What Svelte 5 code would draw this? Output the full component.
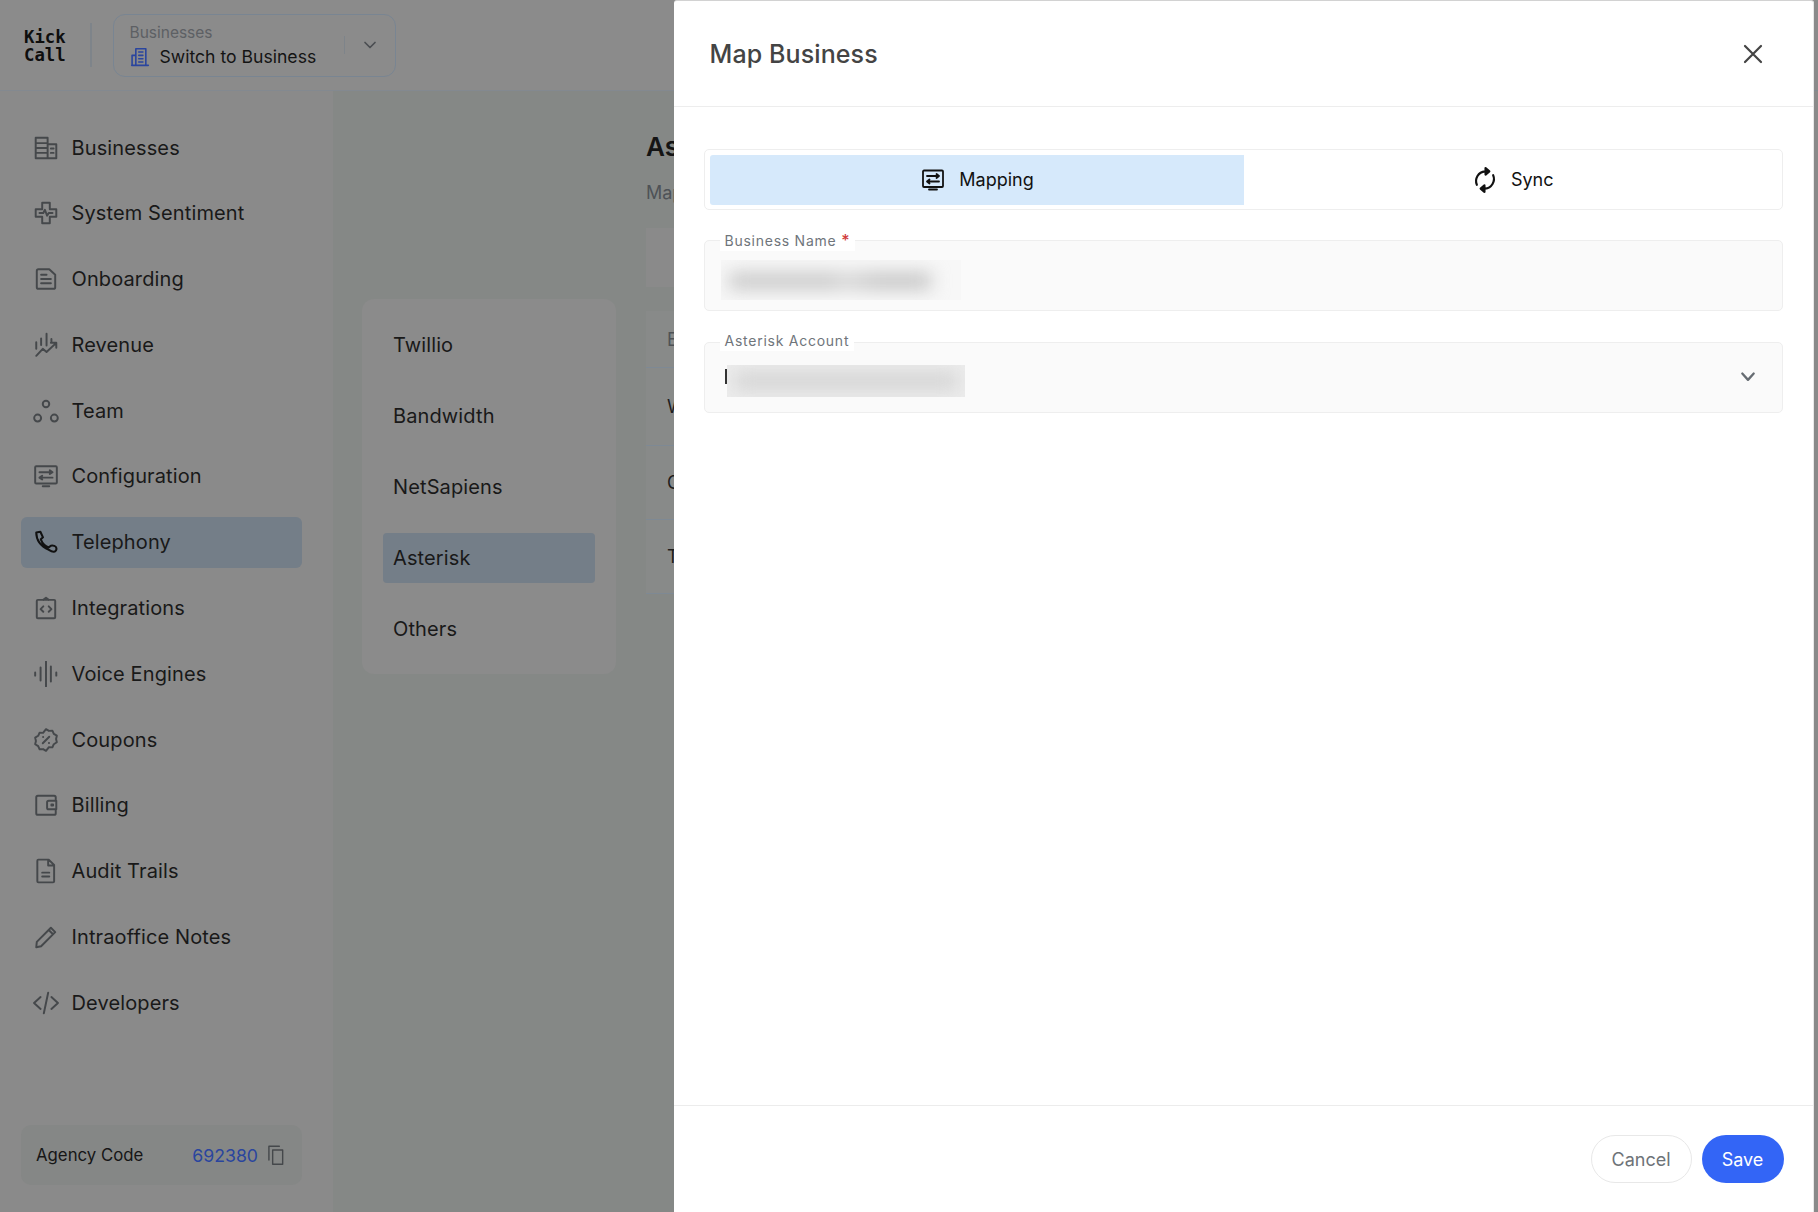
<script>
  const nav = [
    { label: 'Businesses', d: 'M2.500 2.500h11v19h-11zM13.500 8.500H21.500v13h-8M2.500 7.500h11M2.500 12h11M2.500 16.500h11M16.500 12.500h2.500M16.500 16.500h2.500' },
    { label: 'System Sentiment', d: 'M8.500 2.500h7v6H21.500v7h-6v6h-7v-6h-6v-7h6zM6 12h3.500l1.500-3 2 5.500 1.500-2.500H18' },
    { label: 'Onboarding', d: 'M3.500 4.500A1.500 1.500 0 0 1 5 3H15l5.500 5v11.500A1.500 1.500 0 0 1 19 21H5a1.500 1.500 0 0 1-1.500-1.500zM7.500 8h5M7.500 12h9M7.500 16h9' },
    { label: 'Revenue', d: 'M12.500 1.500v11M7.500 6v6M3 9.500v6M17 6.500v3M3 22l6-6.500 3.500 3L21 10.500M16.500 10H21.500v4.500' },
    { label: 'Team', d: 'M15 5.500a3 3 0 1 1-6 0 3 3 0 1 1 6 0zM7.500 18.500a3.200 3.200 0 1 1-6.400 0 3.200 3.200 0 1 1 6.400 0zM22.900 18.500a3.200 3.200 0 1 1-6.400 0 3.200 3.200 0 1 1 6.400 0z' },
    { label: 'Configuration', d: 'M3 3h18a1 1 0 0 1 1 1v14a1 1 0 0 1-1 1H3a1 1 0 0 1-1-1V4a1 1 0 0 1 1-1zM6 8.500h12M15.500 6.800l2.500 1.700-2.500 1.700M18 13.500H6M8.500 11.800 6 13.500l2.500 1.700M9 21.500h6' },
    { label: 'Telephony', active: true, d: 'M3 3.200 6.800 2.500l2.400 5.200-2 1.800c1.300 3.500 4 6.200 7.300 7.500M14.500 17l2-1.600c2-.6 4.800.4 5.100 2.200.2 1.600-.6 3.200-2.300 3.400-1.800.2-3-.6-4.600-1.700C8.500 16.500 3 11 3 3.200' },
    { label: 'Integrations', d: 'M4.500 4.500h15a1 1 0 0 1 1 1v15a1 1 0 0 1-1 1h-15a1 1 0 0 1-1-1v-15a1 1 0 0 1 1-1zM9.500 4.500 12 2.500l2.500 2M9.500 10.500 7 13l2.500 2.500M14.500 10.500 17 13l-2.500 2.500' },
    { label: 'Voice Engines', d: 'M2 10.500v3M7 6v12M12 .500v23M16.500 5v14M21.500 10.500v3' },
    { label: 'Coupons', d: 'M12 2l2.700 1.600 3.200-.2 1.300 2.900 2.800 1.700-.7 3.100.7 3-2.800 1.800-1.300 2.900-3.200-.2L12 22l-2.700-1.600-3.200.2-1.300-2.900L2 15.900l.7-3-.7-3.100 2.800-1.700 1.300-2.900 3.200.2zM9 15l6-6M9.300 9.300h.1M14.700 14.700h.1' },
    { label: 'Billing', d: 'M21 7V5a1.500 1.500 0 0 0-1.500-1.500h-15A1.500 1.500 0 0 0 3 5v14.500A1.500 1.500 0 0 0 4.500 21h15a1.500 1.500 0 0 0 1.500-1.500V17M21.500 8h-7a1.500 1.500 0 0 0-1.500 1.500v5a1.500 1.500 0 0 0 1.500 1.500h7zM17 11.500h1.500v1H17z' },
    { label: 'Audit Trails', d: 'M5 1.500h9.500l5 5v15a1 1 0 0 1-1 1H5a1 1 0 0 1-1-1v-19a1 1 0 0 1 1-1zM14 1.500v5.500h5.500M8.500 13.500h6.500M8.500 17h6.500' },
    { label: 'Intraoffice Notes', d: 'M3.500 16.500 16.500 3.500l4 4L7.500 20.500 3 21.500zM14.500 5.500l4 4' },
    { label: 'Developers', d: 'M7 6.500 1 12l6 5.500M17 6.500l6 5.500-6 5.500M14 2.500l-4 19' }
  ];
  const providers = ['Twillio', 'Bandwidth', 'NetSapiens', 'Asterisk', 'Others'];
  const rows = ['Ext', 'West', 'Central', 'Trunk'];
</script>

<div class="page">
  <header class="topbar">
    <div class="logo">Kick<br />Call</div>
    <div class="vline"></div>
    <div class="switcher">
      <div class="switch-text">
        <span class="switch-label">Businesses</span>
        <span class="switch-value">
          <svg class="bicon" viewBox="0 0 24 24"><path d="M7 2h12v20H7zM7 10H2.500v12H7M22 22H2M10.500 6h5M10.500 10h5M10.500 14h5M10.500 18h5" /></svg>
          Switch to Business
        </span>
      </div>
      <div class="switch-div"></div>
      <svg class="switch-chev" viewBox="0 0 14 14"><path d="M2 4.500 7 9.500l5-5" /></svg>
    </div>
  </header>

  <div class="body">
    <aside class="sidebar">
      <nav class="nav">
        {#each nav as item}
          <div class="nav-item" class:active={item.active}>
            <svg class="nav-icon" viewBox="0 0 24 24"><path d={item.d} /></svg>
            <span>{item.label}</span>
          </div>
        {/each}
      </nav>
      <div class="agency">
        <span>Agency Code</span>
        <span class="code">692380
          <svg class="copy" viewBox="0 0 24 24"><path d="M8 6h12v17H8zM3.500 18V1.500H16" /></svg>
        </span>
      </div>
    </aside>

    <div class="submenu-col">
      <div class="submenu">
        {#each providers as p}
          <div class="sub-item" class:active={p === 'Asterisk'}>{p}</div>
        {/each}
      </div>
    </div>

    <main class="content">
      <h1>Asterisk</h1>
      <p>Mapping</p>
      <div class="table-head"></div>
      <div class="rows">
        {#each rows as r, i}
          <div class="row" style="height:{[57,78,74,74][i]}px">{r}</div>
        {/each}
      </div>
    </main>
  </div>

  <section class="modal">
    <div class="modal-head">
      <h2>Map Business</h2>
      <svg class="close" viewBox="0 0 20 20"><path d="M2 2l16 16M18 2 2 18" /></svg>
    </div>
    <div class="modal-body">
      <div class="tabs">
        <div class="tab on">
          <svg class="tab-icon" viewBox="0 0 24 24"><path d="M3 2.500h18a1 1 0 0 1 1 1V18a1 1 0 0 1-1 1H3a1 1 0 0 1-1-1V3.500a1 1 0 0 1 1-1zM6 8h12M15.500 6l2.500 2-2.500 2M18 13.500H6M8.500 11.500 6 13.500l2.500 2M8 21.500h8" /></svg>
          Mapping
        </div>
        <div class="tab off">
          <svg class="tab-icon sync" viewBox="0 0 24 24"><path d="M4.500 16.500A9 9 0 0 1 12 4h2M19.500 7.500A9 9 0 0 1 12 20h-2M12.500 1l3.500 3-3.500 3zM11.500 17l-3.500 3 3.500 3z" /></svg>
          Sync
        </div>
      </div>

      <div class="field">
        <label class="flabel l1">Business Name <b>*</b></label>
        <div class="redact r1"><i></i></div>
      </div>

      <div class="field second">
        <label class="flabel l2">Asterisk Account</label>
        <div class="caret"></div>
        <div class="redact r2"><i></i></div>
        <svg class="field-chev" viewBox="0 0 14 14"><path d="M2 4 7 9.500 12 4" /></svg>
      </div>
    </div>
    <div class="modal-foot">
      <button class="cancel">Cancel</button>
      <button class="save">Save</button>
    </div>
  </section>
</div>

<style>
  :global(body) { margin: 0; background: #8a8a8a; }
  * { box-sizing: border-box; }
  svg { fill: none; stroke-linecap: round; stroke-linejoin: round; display: block; flex: none; }

  .page {
    position: relative;
    width: 1818px;
    height: 1212px;
    overflow: hidden;
    font-family: Inter, "Liberation Sans", sans-serif;
    color: #161616;
    background: #8a8a8a;
    display: flex;
    flex-direction: column;
  }

  .topbar {
    height: 91px;
    flex: none;
    display: flex;
    align-items: center;
    padding: 0 0 0 24px;
    background: #8b8b8b;
    border-bottom: 1px solid #838990;
  }
  .logo {
    font: 700 17.300px/18px "DejaVu Sans Mono", monospace;
    color: #0e0e0e;
    width: 66px;
    margin-top: 1px;
  }
  .vline { width: 1.5px; height: 44px; background: #7e848a; margin-right: 21px; }
  .switcher {
    width: 283px;
    height: 63px;
    border: 1.5px solid #798592;
    border-radius: 12px;
    display: flex;
    align-items: center;
    padding-left: 16px;
  }
  .switch-text { width: 214px; display: flex; flex-direction: column; gap: 3px; margin-top: 2px; }
  .switch-label { font-size: 15.5px; line-height: 19px; color: #5d6064; }
  .switch-value { display: flex; align-items: center; gap: 10px; font-size: 17.6px; line-height: 24px; color: #141414; white-space: nowrap; }
  .bicon { width: 20px; height: 20px; stroke: #2a459e; stroke-width: 1.9; }
  .switch-div { width: 1.5px; height: 18px; background: #7e848a; }
  .switch-chev { width: 14px; height: 14px; margin-left: 18px; margin-top: -1px; stroke: #4b4e52; stroke-width: 1.7; }

  .body { flex: 1; display: flex; min-height: 0; }

  .sidebar {
    width: 333px;
    flex: none;
    background: #8a8a8a;
    display: flex;
    flex-direction: column;
    justify-content: space-between;
    padding: 31px 31px 27px 21px;
  }
  .nav { display: flex; flex-direction: column; gap: 14.8px; }
  .nav-item {
    height: 51px;
    display: flex;
    align-items: center;
    gap: 12.5px;
    padding-left: 12px;
    border-radius: 6px;
    font-size: 20px;
    letter-spacing: 0.12px;
    color: #191919;
  }
  .nav-item.active { background: #747e88; }
  .nav-icon { width: 26px; height: 26px; stroke: #45484b; stroke-width: 1.8; }
  .active .nav-icon { stroke: #111; stroke-width: 1.9; }

  .agency {
    height: 60px;
    background: #858786;
    border-radius: 10px;
    display: flex;
    align-items: center;
    justify-content: space-between;
    padding: 0 16px 0 15px;
    font-size: 16.8px;
  }
  .code { display: flex; align-items: center; gap: 8px; color: #2a459e; font-size: 17.700px; }
  .copy { width: 20px; height: 20px; stroke: #45484b; stroke-width: 1.7; }

  .submenu-col { width: 313px; flex: none; background: #858886; padding: 208px 0 0 29px; }
  .submenu {
    width: 254px;
    height: 375px;
    background: #8b8b8b;
    border-radius: 12px;
    padding: 21px;
    display: flex;
    flex-direction: column;
    gap: 21px;
  }
  .sub-item {
    height: 50px;
    flex: none;
    display: flex;
    align-items: center;
    padding-left: 10px;
    border-radius: 4px;
    font-size: 20px;
    letter-spacing: .12px;
    color: #191919;
  }
  .sub-item.active { background: #747e88; }

  .content { flex: none; width: 28px; background: #858886; padding-top: 41px; overflow: hidden; white-space: nowrap; }
  .content h1 { margin: 0; font-size: 26px; line-height: 30px; font-weight: 600; color: #141414; }
  .content p { margin: 20px 0 0; font-size: 18px; line-height: 22px; color: #4e5256; }
  .table-head { height: 59px; margin-top: 24px; background: #8a8a8a; }
  .rows { display: flex; flex-direction: column; margin-top: 24px; }
  .row {
    display: flex;
    align-items: center;
    padding-left: 21px;
    font-size: 18px;
    color: #1d1d1d;
    background: #888a89;
    border-bottom: 1px solid #7e8994;
  }
  .row:first-child { color: #4e5256; }

  .modal {
    position: absolute;
    top: 0;
    bottom: 0;
    left: 674px;
    right: 4px;
    background: #fff;
    border-top: 1px solid #d2d2d2;
    border-right: 1.5px solid #e8e8e8;
    border-radius: 3px 3px 0 0;
    display: flex;
    flex-direction: column;
  }
  .modal-head {
    height: 106px;
    flex: none;
    border-bottom: 1.5px solid #ededed;
    display: flex;
    align-items: center;
    justify-content: space-between;
    padding: 0 50px 0 35.500px;
  }
  .modal-head h2 { margin: 0; font-size: 25px; font-weight: 500; letter-spacing: .1px; color: #444; }
  .close { width: 20px; height: 20px; stroke: #444; stroke-width: 2.2; }

  .modal-body { flex: 1; padding: 42px 30px 0 30px; }
  .tabs {
    height: 61px;
    border: 1.5px solid #eeeeee;
    border-radius: 5px;
    padding: 4.500px 0 4.500px 4.500px;
    display: flex;
    margin-bottom: 30px;
  }
  .tab {
    flex: 1;
    display: flex;
    align-items: center;
    justify-content: center;
    gap: 14px;
    font-size: 18px;
    color: #111;
  }
  .tab.on { flex: 0 0 534px; padding-left: 2px; background: #d6e9fb; border-radius: 3px 0 0 3px; }
  .tab.off { gap: 13px; }
  .tab-icon { width: 24px; height: 24px; stroke: #111; stroke-width: 1.8; }
  .tab-icon.sync { width: 26px; height: 28px; stroke-width: 2; }

  .field {
    position: relative;
    height: 71px;
    background: #fafafa;
    border: 1.5px solid #eeeeee;
    border-radius: 5px;
  }
  .field.second { margin-top: 31px; }
  .flabel {
    position: absolute;
    top: -11.500px;
    left: 14.500px;
    padding: 0 5px;
    background: #fff;
    font-size: 14px;
    line-height: 21px;
    letter-spacing: .75px;
    color: #6f757b;
    white-space: nowrap;
  }
  .flabel.l2 { top: -13px; }
  .flabel b { color: #d03a3a; font-weight: 500; font-size: 16px; line-height: 14px; }
  .redact { position: absolute; overflow: hidden; background: #f7f7f7; }
  .redact i { position: absolute; display: block; filter: blur(9px); }
  .r1 { left: 16px; top: 19px; width: 240px; height: 40px; }
  .r1 i { left: 8px; right: 30px; top: 13px; bottom: 11px; background: linear-gradient(90deg, #c6c6c6 0 52%, #d6d6d6 56%, #c2c2c2 74% 100%); }
  .r2 { left: 21.500px; top: 22px; width: 238px; height: 32px; background: #ececec; }
  .r2 i { left: 8px; right: 8px; top: 8px; bottom: 8px; background: #d2d2d2; }
  .caret { position: absolute; left: 20px; top: 26px; width: 1.500px; height: 15px; background: #333; }
  .field-chev { position: absolute; right: 26px; top: 26px; width: 16px; height: 16px; stroke: #666c72; stroke-width: 2; }

  .modal-foot {
    height: 107px;
    flex: none;
    border-top: 1.5px solid #ececec;
    display: flex;
    justify-content: flex-end;
    align-items: flex-start;
    gap: 10px;
    padding: 29px 29.500px 0 0;
  }
  button { height: 48px; border-radius: 24px; font-family: inherit; font-size: 18px; cursor: pointer; }
  .cancel { width: 101px; background: #fff; border: 1.5px solid #e8e8e8; color: #6e7378; }
  .save { width: 82px; background: #3365f6; border: none; color: #fff; }
</style>
